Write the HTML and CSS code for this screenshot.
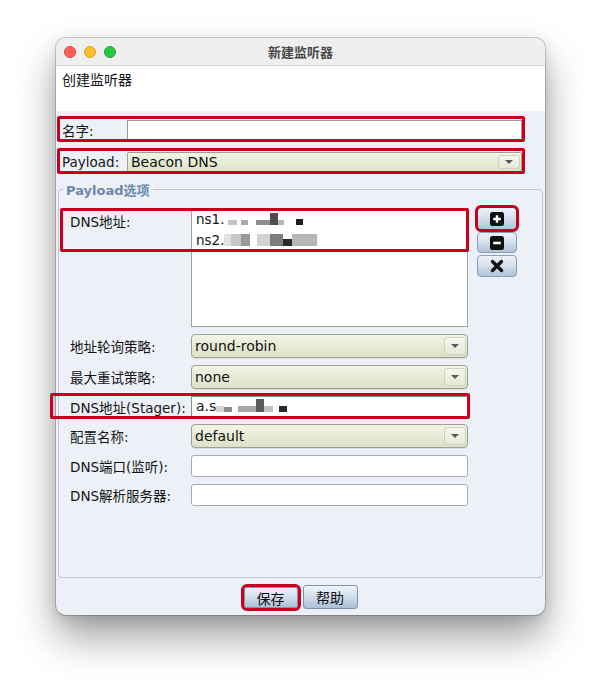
FILE: index.html
```html
<!DOCTYPE html>
<html lang="zh">
<head>
<meta charset="utf-8">
<title>新建监听器</title>
<link rel="stylesheet" href="styles.css">
</head>
<body>
<div class="window">
  <div class="titlebar">
    <div class="lights">
      <span class="light l-red"></span>
      <span class="light l-yellow"></span>
      <span class="light l-green"></span>
    </div>
    <div class="title">新建监听器</div>
    <div></div>
  </div>
  <div class="header">创建监听器</div>
  <div class="body">
    <div class="toprow">
      <span class="toplabel">名字:</span>
      <div class="field flat name-field"></div>
      <span class="mark mark-top"></span>
    </div>
    <div class="toprow">
      <span class="toplabel">Payload:</span>
      <div class="combo combo-small"><span class="val">Beacon DNS</span><span class="arrow"><i class="tri"></i></span></div>
      <span class="mark mark-top"></span>
    </div>

    <fieldset class="group">
      <legend>Payload选项</legend>

      <div class="frow dnsrow">
        <span class="flabel dnslabel">DNS地址:</span>
        <div class="textarea">
          <div class="line">ns1.<span class="px p1"></span><span class="px p2"></span><span class="px p3"></span><span class="px p4"></span><span class="px p5"></span><span class="px p6"></span></div>
          <div class="line">ns2.<span class="px q1"></span><span class="px q2"></span><span class="px q3"></span><span class="px q4"></span><span class="px q5"></span><span class="px q6"></span><span class="px q7"></span></div>
        </div>
        <div class="tools">
          <button class="tool tool-add"><svg width="14" height="14" viewBox="0 0 14 14"><rect x="0" y="0" width="14" height="14" rx="2.5" fill="#111"/><path d="M7 3.2v7.6M3.2 7h7.6" stroke="#fff" stroke-width="2.4"/></svg></button>
          <button class="tool tool-remove"><svg width="14" height="14" viewBox="0 0 14 14"><rect x="0" y="0" width="14" height="14" rx="2.5" fill="#111"/><path d="M3.2 7h7.6" stroke="#fff" stroke-width="2.6"/></svg></button>
          <button class="tool tool-clear"><svg width="14" height="14" viewBox="0 0 14 14"><path d="M2.5 2.5l9 9M11.5 2.5l-9 9" stroke="#111" stroke-width="3.4" stroke-linecap="round"/></svg></button>
        </div>
        <span class="mark mark-dns"></span>
      </div>

      <div class="frow">
        <span class="flabel">地址轮询策略:</span>
        <div class="combo"><span class="val">round-robin</span><span class="arrow"><i class="tri"></i></span></div>
      </div>
      <div class="frow">
        <span class="flabel">最大重试策略:</span>
        <div class="combo"><span class="val">none</span><span class="arrow"><i class="tri"></i></span></div>
      </div>
      <div class="frow">
        <span class="flabel">DNS地址(Stager):</span>
        <div class="field stager">a.s<span class="px s1"></span><span class="px s2"></span><span class="px s3"></span><span class="px s4"></span><span class="px s5"></span><span class="px s6"></span></div>
        <span class="mark mark-stager"></span>
      </div>
      <div class="frow">
        <span class="flabel">配置名称:</span>
        <div class="combo"><span class="val">default</span><span class="arrow"><i class="tri"></i></span></div>
      </div>
      <div class="frow">
        <span class="flabel">DNS端口(监听):</span>
        <div class="field plain"></div>
      </div>
      <div class="frow">
        <span class="flabel">DNS解析服务器:</span>
        <div class="field plain"></div>
      </div>
    </fieldset>

    <div class="actions">
      <button class="btn btn-save">保存</button>
      <button class="btn btn-help">帮助</button>
    </div>
  </div>
</div>
</body>
</html>
```
FILE: styles.css
```css
* { box-sizing: border-box; }

html {
  height: 100%;
  background: #ffffff;
}

body {
  margin: 0;
  min-height: 100%;
  padding: 38px 0 74px 56px;
  background: #ffffff;
  font-family: "DejaVu Sans", "Noto Sans CJK SC", sans-serif;
  font-size: 13.5px;
  color: #141414;
}

.window {
  width: 489px;
  height: 577px;
  border-radius: 10px;
  background: #edf0f7;
  box-shadow: 0 22px 40px rgba(0, 0, 0, 0.38), 0 4px 14px rgba(0, 0, 0, 0.12), 0 0 0 1px rgba(0, 0, 0, 0.18);
  display: flex;
  flex-direction: column;
}

.titlebar {
  height: 28px;
  border-bottom: 1px solid #d2d4d8;
  background: #efefef;
  border-radius: 10px 10px 0 0;
  display: grid;
  grid-template-columns: 1fr auto 1fr;
  align-items: center;
}

.lights {
  display: flex;
  gap: 8px;
  padding-left: 8px;
}

.light {
  width: 12px;
  height: 12px;
  border-radius: 50%;
}
.l-red { background: #fe5f57; border: 0.5px solid #e0443e; }
.l-yellow { background: #febc2e; border: 0.5px solid #dea123; }
.l-green { background: #28c840; border: 0.5px solid #1aab29; }

.title {
  font-weight: bold;
  font-size: 13px;
  color: #4a4a4a;
}

.header {
  height: 45px;
  background: #ffffff;
  padding: 3px 6px;
  font-size: 14px;
  color: #111;
}

.body {
  flex: 1;
  padding-top: 9px;
  display: flex;
  flex-direction: column;
}

.toprow {
  position: relative;
  display: flex;
  align-items: center;
  margin-left: 6px;
  width: 460px;
  height: 20px;
}
.toprow + .toprow { margin-top: 12px; }

.toplabel {
  width: 65px;
  flex: none;
}

.mark {
  position: absolute;
  border: 3px solid #c8001e;
  border-radius: 2px;
  pointer-events: none;
}
.mark-top { left: -5px; right: -3px; top: -4px; bottom: -2px; }
.mark-dns { left: -10px; top: 0; width: 409px; height: 44px; }
.mark-stager { left: -20px; top: -3px; width: 420px; height: 26px; }

.field {
  background: #ffffff;
  border: 1px solid #a8acb4;
}
.flat { border-color: #9a9a9a; border-radius: 0; }
.name-field { flex: 1; height: 20px; }

.combo {
  display: flex;
  align-items: center;
  width: 277px;
  height: 24px;
  border: 1px solid #9ea191;
  border-radius: 4px;
  background: linear-gradient(#f2f4e6, #dde2c6);
  box-shadow: 0 1px 1px rgba(0, 0, 0, 0.08);
}
.combo-small {
  flex: 1;
  width: auto;
  height: 20px;
  border-radius: 2px;
}
.val {
  padding-left: 3px;
  font-size: 14px;
  color: #111;
}
.arrow {
  margin-left: auto;
  margin-right: 1px;
  width: 22px;
  height: calc(100% - 4px);
  border: 1px solid #cfd1c2;
  border-radius: 3px;
  background: linear-gradient(#f5f6ee, #e6e9d6);
  display: flex;
  align-items: center;
  justify-content: center;
}
.tri {
  width: 0;
  height: 0;
  border-left: 4px solid transparent;
  border-right: 4px solid transparent;
  border-top: 4px solid #5a5a5a;
}

.group {
  margin: 8px 0 0 2px;
  width: 485px;
  border: 1px solid #bcc6d6;
  border-radius: 4px;
  padding: 9px 0 71px 11px;
}
.group legend {
  margin-left: -7px;
  padding: 0 3px;
  font-weight: bold;
  font-size: 13px;
  color: #6b88ad;
}

.frow {
  position: relative;
  display: flex;
  align-items: center;
}
.frow + .frow { margin-top: 7px; }

.flabel {
  width: 121px;
  flex: none;
}

.dnsrow { align-items: flex-start; }
.dnslabel { padding-top: 3px; }

.textarea {
  width: 277px;
  height: 119px;
  background: #ffffff;
  border: 1px solid #a3a3a3;
  padding: 0 4px;
  font-size: 13.5px;
  line-height: 21px;
}
.line { white-space: nowrap; }

.px {
  display: inline-block;
  vertical-align: -1px;
}
.p1 { width: 9px; height: 5px; background: #c4c4c4; margin-left: 4px; }
.p2 { width: 7px; height: 5px; background: #a9a9a9; margin-left: 4px; }
.p3 { width: 14px; height: 5px; background: #8f8f8f; margin-left: 8px; }
.p4 { width: 8px; height: 12px; background: #4e4e4e; }
.p5 { width: 6px; height: 5px; background: #b8b8b8; }
.p6 { width: 7px; height: 6px; background: #1e1e1e; margin-left: 12px; }
.q1 { width: 7px; height: 12px; background: #e2e2e2; }
.q2 { width: 10px; height: 12px; background: #c6c6c6; }
.q3 { width: 9px; height: 12px; background: #9a9a9a; }
.q4 { width: 13px; height: 12px; background: #d2d2d2; margin-left: 7px; }
.q5 { width: 13px; height: 12px; background: #7c7c7c; }
.q6 { width: 9px; height: 7px; background: #2a2a2a; }
.q7 { width: 25px; height: 12px; background: #b6b6b6; }

.tools {
  margin-left: 9px;
  margin-top: -1px;
  display: flex;
  flex-direction: column;
  gap: 2px;
}
.tool {
  width: 40px;
  height: 22px;
  padding: 0;
  border: 1px solid #8a9db6;
  border-radius: 4px;
  background: linear-gradient(#eef3f9, #d6e1ee 45%, #aec3da);
  display: flex;
  align-items: center;
  justify-content: center;
}
.tool-add {
  height: 23px;
  outline: 3px solid #c8001e;
  outline-offset: -1px;
}
.tool-remove { height: 21px; }

.stager {
  width: 277px;
  height: 21px;
  border-color: #8c8c8c;
  padding-left: 4px;
  font-size: 14px;
  line-height: 19px;
  white-space: nowrap;
}
.s1 { width: 8px; height: 6px; background: #d4d4d4; }
.s2 { width: 8px; height: 5px; background: #8c8c8c; }
.s3 { width: 18px; height: 6px; background: #a8a8a8; margin-left: 6px; }
.s4 { width: 8px; height: 13px; background: #5a5a5a; }
.s5 { width: 9px; height: 6px; background: #c0c0c0; }
.s6 { width: 8px; height: 6px; background: #2a2a2a; margin-left: 6px; }

.plain {
  width: 277px;
  height: 22px;
  border-radius: 3px;
}

.actions {
  display: flex;
  justify-content: center;
  align-items: center;
  gap: 5px;
  margin-top: 7px;
}
.btn {
  font-family: "DejaVu Sans", "Noto Sans CJK SC", sans-serif;
  font-size: 14px;
  color: #111;
  padding: 0;
  border: 1px solid #7f93ad;
  border-radius: 3px;
  background: linear-gradient(#eef3f9, #d4dfec 45%, #aabfd7);
}
.btn-save {
  width: 54px;
  height: 21px;
  outline: 3px solid #c8001e;
  outline-offset: 0;
}
.btn-help {
  width: 55px;
  height: 24px;
}
```
